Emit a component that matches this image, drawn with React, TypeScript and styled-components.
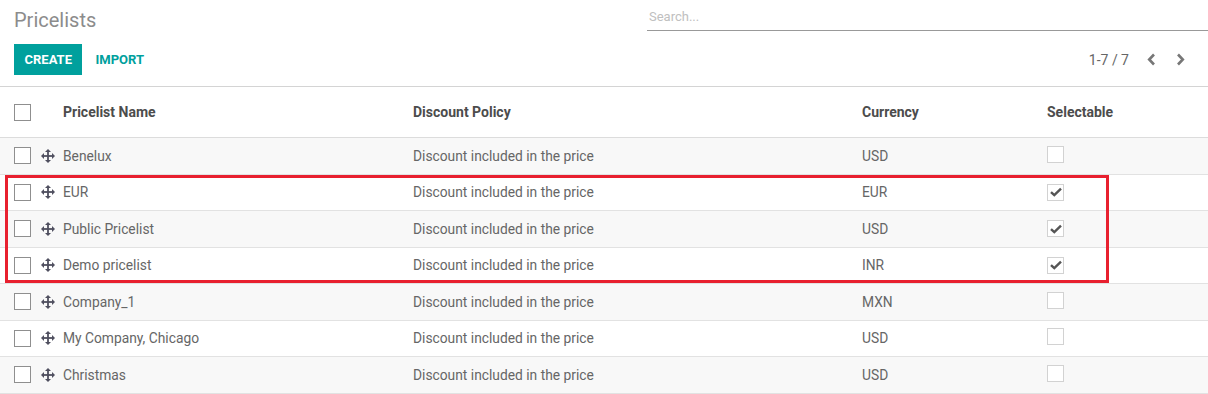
import React from "react";
import styled, { createGlobalStyle } from "styled-components";

type Pricelist = {
  name: string;
  currency: string;
  selectable: boolean;
};

const rows: Pricelist[] = [
  { name: "Benelux", currency: "USD", selectable: false },
  { name: "EUR", currency: "EUR", selectable: true },
  { name: "Public Pricelist", currency: "USD", selectable: true },
  { name: "Demo pricelist", currency: "INR", selectable: true },
  { name: "Company_1", currency: "MXN", selectable: false },
  { name: "My Company, Chicago", currency: "USD", selectable: false },
  { name: "Christmas", currency: "USD", selectable: false },
];

const GlobalStyle = createGlobalStyle`
  body {
    margin: 0;
    background: #fff;
    font-family: Roboto, "Liberation Sans", sans-serif;
    color: #666;
  }
`;

const Page = styled.div`
  position: relative;
  width: 1208px;
`;

const ControlPanel = styled.div`
  display: grid;
  grid-template-columns: 647px 1fr;
  grid-template-rows: 44px 42px;
  border-bottom: 1px solid #d4d4d4;
`;

const Title = styled.h1`
  margin: 0;
  padding: 7px 0 0 14px;
  font-size: 20px;
  font-weight: 400;
  color: #8c8c8c;
  line-height: 26px;
`;

const Search = styled.div`
  margin-top: 6px;
  height: 24px;
  border-bottom: 1px solid #999;
  font-size: 13px;
  color: #c0c0c0;
  line-height: 22px;
  padding-left: 2px;
`;

const Buttons = styled.div`
  display: flex;
  align-items: flex-start;
  padding-left: 14px;
`;

const Button = styled.button<{ $primary?: boolean }>`
  height: 31px;
  padding: 0 ${({ $primary }) => ($primary ? "10.5px" : "11px")} 0
    ${({ $primary }) => ($primary ? "10.5px" : "13px")};
  border: none;
  border-radius: 0;
  font-family: inherit;
  font-size: 13px;
  font-weight: 700;
  background: ${({ $primary }) => ($primary ? "#00a09d" : "transparent")};
  color: ${({ $primary }) => ($primary ? "#fff" : "#00a09d")};
`;

const Pager = styled.div`
  display: flex;
  align-items: center;
  justify-content: flex-end;
  height: 31px;
  padding-right: 13px;
  font-size: 14px;
  color: #666;
`;

const PagerValue = styled.span`
  margin-right: 8px;
`;

const Arrow = styled.span`
  display: inline-flex;
  width: 29px;
  justify-content: center;
`;

const Row = styled.div<{ $header?: boolean; $striped?: boolean }>`
  display: grid;
  grid-template-columns: 49px 350px 449px 185px 1fr;
  align-items: center;
  padding-left: 14px;
  height: ${({ $header }) => ($header ? "51px" : "36.5px")};
  box-sizing: border-box;
  font-size: ${({ $header }) => ($header ? "14px" : "13.8px")};
  font-weight: ${({ $header }) => ($header ? 700 : 400)};
  color: ${({ $header }) => ($header ? "#4c4c4c" : "#666")};
  background: ${({ $striped }) => ($striped ? "#f8f8f8" : "#fff")};
  border-bottom: 1px solid ${({ $header }) => ($header ? "#dcdcdc" : "#e2e2e2")};
  box-shadow: ${({ $header }) =>
    $header ? "0 2px 3px -1px rgba(0,0,0,0.08)" : "none"};
  position: relative;
`;

const Lead = styled.div`
  display: flex;
  align-items: center;
  gap: 10px;
`;

const Box = styled.span<{ $light?: boolean }>`
  display: inline-flex;
  align-items: center;
  justify-content: center;
  width: 17px;
  height: 17px;
  box-sizing: border-box;
  border: 1px solid ${({ $light }) => ($light ? "#d2d2d2" : "#8f8f8f")};
  background: #fff;
`;

const Highlight = styled.div`
  position: absolute;
  left: 5px;
  top: 175px;
  width: 1104px;
  height: 108px;
  box-sizing: border-box;
  border: 3px solid #e8202f;
  pointer-events: none;
`;

const MoveIcon = () => (
  <svg width="14" height="14" viewBox="0 0 14 14">
    <g fill="#4f4f5f">
      <rect x="6.1" y="2" width="1.8" height="10" />
      <rect x="2" y="6.1" width="10" height="1.8" />
      <path d="M7 0 L10 3 H4 Z" />
      <path d="M7 14 L10 11 H4 Z" />
      <path d="M0 7 L3 4 V10 Z" />
      <path d="M14 7 L11 4 V10 Z" />
    </g>
  </svg>
);

const Check = () => (
  <svg width="12" height="10" viewBox="0 0 12 10">
    <path d="M1 5.2 L4.3 8.2 L11 1.6" fill="none" stroke="#555" strokeWidth="2.4" />
  </svg>
);

const Chevron = ({ left }: { left?: boolean }) => (
  <svg width="9" height="13" viewBox="0 0 9 13">
    <path
      d={left ? "M7 1.5 L2.2 6.5 L7 11.5" : "M2 1.5 L6.8 6.5 L2 11.5"}
      fill="none"
      stroke="#777"
      strokeWidth="2.6"
    />
  </svg>
);

export default function App() {
  return (
    <Page>
      <GlobalStyle />
      <ControlPanel>
        <Title>Pricelists</Title>
        <Search>Search...</Search>
        <Buttons>
          <Button $primary>CREATE</Button>
          <Button>IMPORT</Button>
        </Buttons>
        <Pager>
          <PagerValue>1-7 / 7</PagerValue>
          <Arrow><Chevron left /></Arrow>
          <Arrow><Chevron /></Arrow>
        </Pager>
      </ControlPanel>
      <Row $header>
        <Lead><Box /></Lead>
        <div>Pricelist Name</div>
        <div>Discount Policy</div>
        <div>Currency</div>
        <div>Selectable</div>
      </Row>
      {rows.map((r, i) => (
        <Row key={r.name} $striped={i % 2 === 0}>
          <Lead>
            <Box />
            <MoveIcon />
          </Lead>
          <div>{r.name}</div>
          <div>Discount included in the price</div>
          <div>{r.currency}</div>
          <div>
            <Box $light>{r.selectable && <Check />}</Box>
          </div>
        </Row>
      ))}
      <Highlight />
    </Page>
  );
}
